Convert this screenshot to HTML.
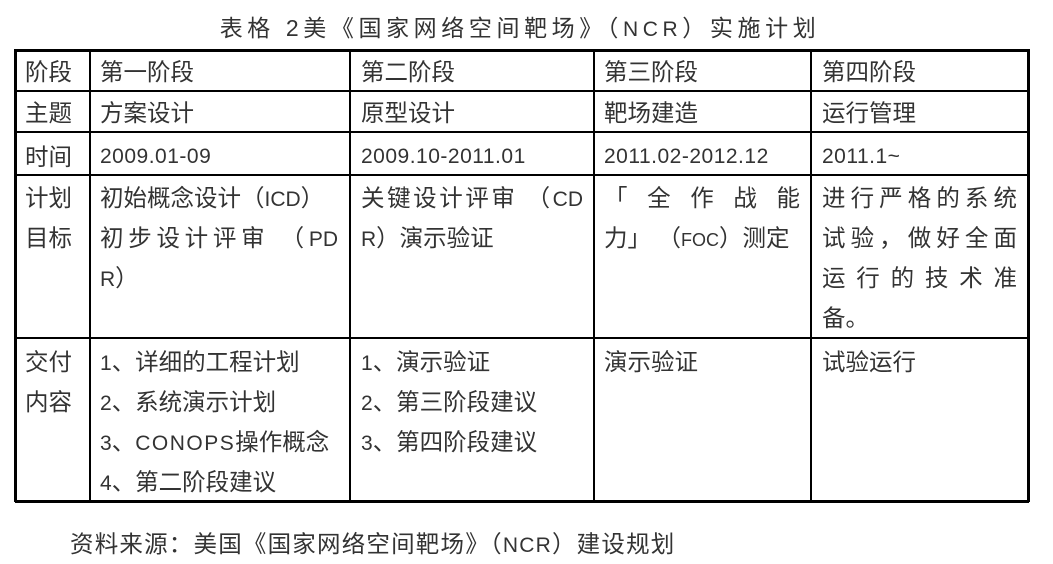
<!DOCTYPE html>
<html><head><meta charset="utf-8"><style>
body{margin:0;width:1053px;height:559px;background:#fff;position:relative;overflow:hidden;font-family:"Liberation Sans","Noto Sans CJK SC",sans-serif;color:#333;}
.h{position:absolute;background:#000;height:2px;left:15px;width:1014px}
.v{position:absolute;background:#000;width:2px;top:49px;height:453px}
.t{position:absolute;font-size:23.5px;line-height:40px;height:40px;white-space:nowrap}
.l{font-size:21px;line-height:10px}
.j{text-align:justify;text-align-last:justify}
</style></head><body>
<div class="t" style="left:0;width:1040px;text-align:center;top:8px;letter-spacing:4.6px;font-size:23px">表格 2美《国家网络空间靶场》（<span class="l">NCR</span>）实施计划</div>
<div class="h" style="top:49px;height:3px"></div>
<div class="h" style="top:90px"></div>
<div class="h" style="top:131px"></div>
<div class="h" style="top:174px"></div>
<div class="h" style="top:337px"></div>
<div class="h" style="top:500px;height:3px"></div>
<div class="v" style="left:14px;width:3px"></div>
<div class="v" style="left:89px"></div>
<div class="v" style="left:349px"></div>
<div class="v" style="left:593px"></div>
<div class="v" style="left:810px"></div>
<div class="v" style="left:1027px;width:3px"></div>

<div class="t" style="left:25px;top:52px">阶段</div>
<div class="t" style="left:100px;top:52px">第一阶段</div>
<div class="t" style="left:361px;top:52px">第二阶段</div>
<div class="t" style="left:604px;top:52px">第三阶段</div>
<div class="t" style="left:822px;top:52px">第四阶段</div>

<div class="t" style="left:25px;top:93px">主题</div>
<div class="t" style="left:100px;top:93px">方案设计</div>
<div class="t" style="left:361px;top:93px">原型设计</div>
<div class="t" style="left:604px;top:93px">靶场建造</div>
<div class="t" style="left:822px;top:93px">运行管理</div>

<div class="t" style="left:25px;top:137px">时间</div>
<div class="t" style="left:100px;top:137px;font-size:21px;letter-spacing:0.5px">2009.01-09</div>
<div class="t" style="left:361px;top:137px;font-size:21px;letter-spacing:0.5px">2009.10-2011.01</div>
<div class="t" style="left:604px;top:137px;font-size:21px;letter-spacing:0.5px">2011.02-2012.12</div>
<div class="t" style="left:822px;top:137px;font-size:21px;letter-spacing:0.5px">2011.1~</div>

<div class="t" style="left:25px;top:178px">计划</div>
<div class="t" style="left:25px;top:218px">目标</div>
<div class="t" style="left:100px;top:178px">初始概念设计（<span class="l">ICD</span>）</div>
<div class="t j" style="left:100px;top:218px;width:238px">初步设计评审 （<span class="l">PD</span></div>
<div class="t" style="left:100px;top:258px"><span class="l">R</span>）</div>
<div class="t j" style="left:361px;top:178px;width:222px">关键设计评审 （<span class="l">CD</span></div>
<div class="t" style="left:361px;top:218px"><span class="l">R</span>）演示验证</div>
<div class="t j" style="left:604px;top:178px;width:196px">「 全 作 战 能</div>
<div class="t" style="left:604px;top:218px">力」 （<span style="font-size:18px;line-height:10px">FOC</span>）测定</div>
<div class="t j" style="left:822px;top:178px;width:195px">进行严格的系统</div>
<div class="t j" style="left:822px;top:218px;width:195px">试验，做好全面</div>
<div class="t j" style="left:822px;top:258px;width:195px">运行的技术准</div>
<div class="t" style="left:822px;top:298px">备。</div>

<div class="t" style="left:25px;top:342px">交付</div>
<div class="t" style="left:25px;top:382px">内容</div>
<div class="t" style="left:100px;top:342px"><span class="l">1</span>、详细的工程计划</div>
<div class="t" style="left:100px;top:382px"><span class="l">2</span>、系统演示计划</div>
<div class="t" style="left:100px;top:422px"><span class="l">3</span>、<span class="l" style="letter-spacing:1.5px">CONOPS</span>操作概念</div>
<div class="t" style="left:100px;top:462px"><span class="l">4</span>、第二阶段建议</div>
<div class="t" style="left:361px;top:342px"><span class="l">1</span>、演示验证</div>
<div class="t" style="left:361px;top:382px"><span class="l">2</span>、第三阶段建议</div>
<div class="t" style="left:361px;top:422px"><span class="l">3</span>、第四阶段建议</div>
<div class="t" style="left:604px;top:342px">演示验证</div>
<div class="t" style="left:822px;top:342px">试验运行</div>

<div class="t" style="left:70px;top:524px;letter-spacing:1.2px">资料来源：美国《国家网络空间靶场》（<span class="l">NCR</span>）建设规划</div>
</body></html>
